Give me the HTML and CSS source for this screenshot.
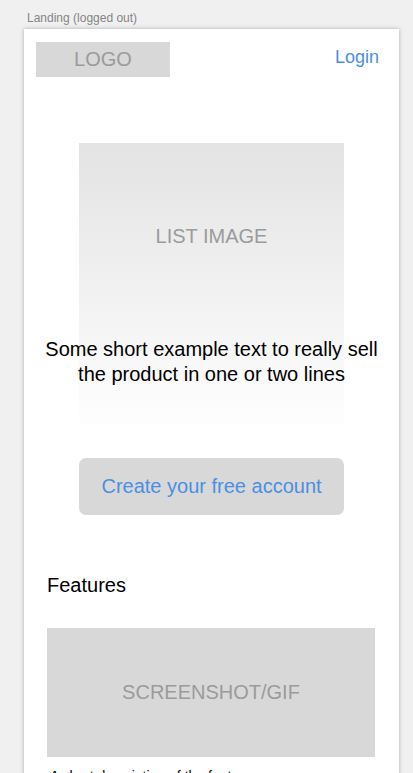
FILE: index.html
```html
<!DOCTYPE html>
<html>
<head>
<meta charset="utf-8">
<link rel="stylesheet" href="styles.css">
</head>
<body>
<div class="artboard-label">Landing (logged out)</div>
<main class="card">
  <header class="topbar">
    <div class="logo">LOGO</div>
    <a class="login">Login</a>
  </header>
  <section class="hero">
    <div class="list-image">LIST IMAGE</div>
    <p class="headline">Some short example text to really sell the product in one or two lines</p>
  </section>
  <div class="cta-wrap">
    <button class="cta">Create your free account</button>
  </div>
  <section class="features">
    <h2 class="features-title">Features</h2>
    <div class="shot">SCREENSHOT/GIF</div>
    <p class="feature-desc">A short description of the feature.</p>
  </section>
</main>
</body>
</html>
```
FILE: styles.css
```css
* { box-sizing: border-box; }
html, body { margin: 0; padding: 0; }
body {
  background: #f0f0f0;
  font-family: "Liberation Sans", Arial, sans-serif;
  overflow: hidden;
  height: 773px;
}
.artboard-label {
  padding: 11px 0 0 27px;
  font-size: 12px;
  line-height: 14px;
  color: #858585;
  height: 29px;
}
.card {
  margin-left: 24px;
  width: 375px;
  background: #fff;
  box-shadow: 0 0 4px rgba(0,0,0,0.28);
  min-height: 900px;
}
.topbar {
  display: flex;
  justify-content: space-between;
  align-items: flex-start;
  padding: 13px 20px 0 12px;
}
.logo {
  width: 134px;
  height: 35px;
  background: #d8d8d8;
  color: #9b9b9b;
  font-size: 20px;
  display: flex;
  align-items: center;
  justify-content: center;
}
.login {
  color: #4a90e2;
  font-size: 18px;
  line-height: 20px;
  margin-top: 5px;
}
.hero {
  display: grid;
  margin-top: 66px;
}
.list-image, .headline { grid-area: 1 / 1; }
.list-image {
  justify-self: center;
  width: 265px;
  height: 282px;
  background: linear-gradient(#e3e3e3, #fefefe);
  color: #9b9b9b;
  font-size: 20px;
  line-height: 25px;
  text-align: center;
  padding-top: 81px;
}
.headline {
  margin: 194px 0 0;
  align-self: start;
  text-align: center;
  font-size: 20px;
  line-height: 25px;
  color: #000;
  padding: 0 20px;
}
.cta-wrap {
  display: flex;
  justify-content: center;
  margin-top: 33px;
}
.cta {
  width: 265px;
  height: 57px;
  border: none;
  border-radius: 7px;
  background: #d8d8d8;
  color: #4a90e2;
  font-family: inherit;
  font-size: 20px;
  padding: 0;
}
.features {
  padding: 0 24px 0 23px;
  margin-top: 58px;
}
.features-title {
  margin: 0;
  font-weight: normal;
  font-size: 20px;
  line-height: 25px;
  color: #000;
}
.shot {
  margin-top: 30px;
  height: 129px;
  background: #d8d8d8;
  color: #9b9b9b;
  font-size: 20px;
  display: flex;
  align-items: center;
  justify-content: center;
}
.feature-desc {
  margin: 9px 0 0 3px;
  font-size: 14px;
  line-height: 20px;
  color: #000;
}
```
